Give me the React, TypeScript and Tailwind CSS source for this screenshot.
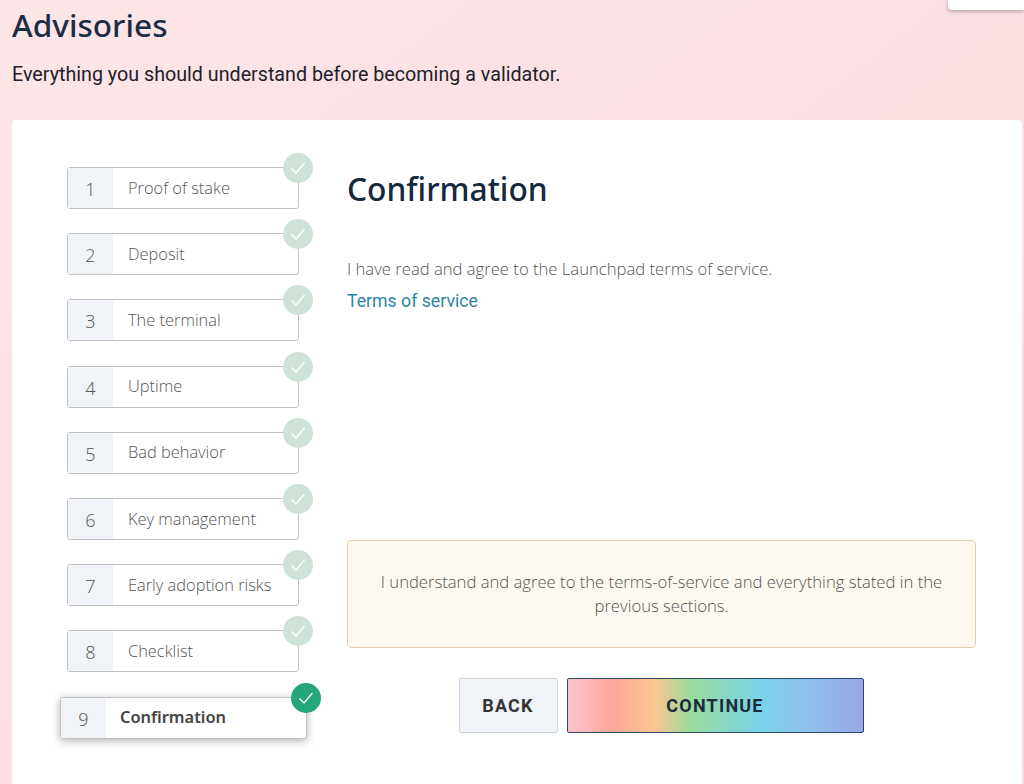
const steps = [
  "Proof of stake",
  "Deposit",
  "The terminal",
  "Uptime",
  "Bad behavior",
  "Key management",
  "Early adoption risks",
  "Checklist",
  "Confirmation",
];

function Check({ active }: { active: boolean }) {
  return (
    <div
      className={
        "absolute -right-[15px] -top-[15px] flex h-[30px] w-[30px] items-center justify-center rounded-full " +
        (active ? "bg-[#26a67c]" : "bg-[#cfe2d8]")
      }
    >
      <svg width="18" height="18" viewBox="0 0 18 18" fill="none" stroke="white" strokeWidth="1.3">
        <path d="M2.5 9.5 L7 14 L15.5 4" />
      </svg>
    </div>
  );
}

function Step({ index, name, active }: { index: number; name: string; active: boolean }) {
  return (
    <div
      className={
        "relative flex h-[42px] rounded-[3px] border border-[#c2c2c2] bg-white " +
        (active ? "w-[247px] -ml-[7px] shadow-[0_2px_8px_rgba(0,0,0,0.3)]" : "w-[232px]")
      }
    >
      <div className="flex w-[45px] items-center justify-center bg-[#f0f3f8] pt-[3px] font-['Open_Sans',sans-serif] text-[18px] font-light text-[#555]">
        {index}
      </div>
      <div
        className={
          "flex items-center " +
          (active
            ? "pl-[14px] text-[16.4px] font-semibold text-[#444]"
            : "pl-[15px] font-['Open_Sans',sans-serif] text-[16.4px] font-light text-[#555]")
        }
      >
        {name}
      </div>
      <Check active={active} />
    </div>
  );
}

export default function App() {
  return (
    <div className="relative h-[784px] w-[1024px] overflow-hidden bg-gradient-to-br from-[#fde6e8] to-[#fdd9de] font-['Noto_Sans',sans-serif]">
      <div className="absolute right-0 top-0 h-[10px] w-[76px] rounded-bl-[4px] bg-white shadow-[0_1px_4px_rgba(0,0,0,0.35)]" />

      <div className="h-[120px] pl-[12px] pt-[4px]">
        <h1 className="text-[31.6px] font-medium leading-[41px] text-[#1b2e45]">Advisories</h1>
        <p className="mt-[18px] font-['Roboto',sans-serif] text-[19.7px] leading-[24px] text-[#22202a]">
          Everything you should understand before becoming a validator.
        </p>
      </div>

      <div className="ml-[12px] mr-[2px] flex h-[680px] rounded-[4px] bg-white pl-[55px] pt-[47px]">
        <div className="flex w-[280px] shrink-0 flex-col gap-[24.2px]">
          {steps.map((name, i) => (
            <Step key={name} index={i + 1} name={name} active={i === steps.length - 1} />
          ))}
        </div>

        <div className="w-[629px]">
          <h2 className="text-[31.7px] font-medium leading-[44px] text-[#14293f]">Confirmation</h2>
          <p className="mt-[46px] font-['Open_Sans',sans-serif] text-[16.65px] font-light leading-[24px] text-[#555]">
            I have read and agree to the Launchpad terms of service.
          </p>
          <a className="mt-[8px] block font-['Roboto',sans-serif] text-[17.7px] leading-[24px] text-[#2f84a5]">
            Terms of service
          </a>

          <div className="mt-[227px] flex h-[108px] items-center justify-center rounded-[4px] border border-[#e6cfae] bg-[#fff8f1] px-[30px] text-center font-['Open_Sans',sans-serif] text-[16.65px] font-light leading-[24px] text-[#555]">
            I understand and agree to the terms-of-service and everything stated in the previous sections.
          </div>

          <div className="mt-[30px] flex justify-center gap-[9px] pr-[1px] font-['Roboto',sans-serif] text-[18px] font-bold tracking-[1.2px]">
            <button className="h-[55px] w-[99px] rounded-[2px] border border-[#cfd3d9] bg-[#f0f3f8] text-[#333]">
              BACK
            </button>
            <button className="h-[55px] w-[297px] rounded-[2px] border border-[#2f4a66] bg-[linear-gradient(90deg,#fdc5cd_0%,#fea79b_15%,#fdc58f_29%,#98dc9e_42%,#79d3e8_65%,#8ec3ec_80%,#99a8e6_100%)] text-[#1c2c3c]">
              CONTINUE
            </button>
          </div>
        </div>
      </div>
    </div>
  );
}
